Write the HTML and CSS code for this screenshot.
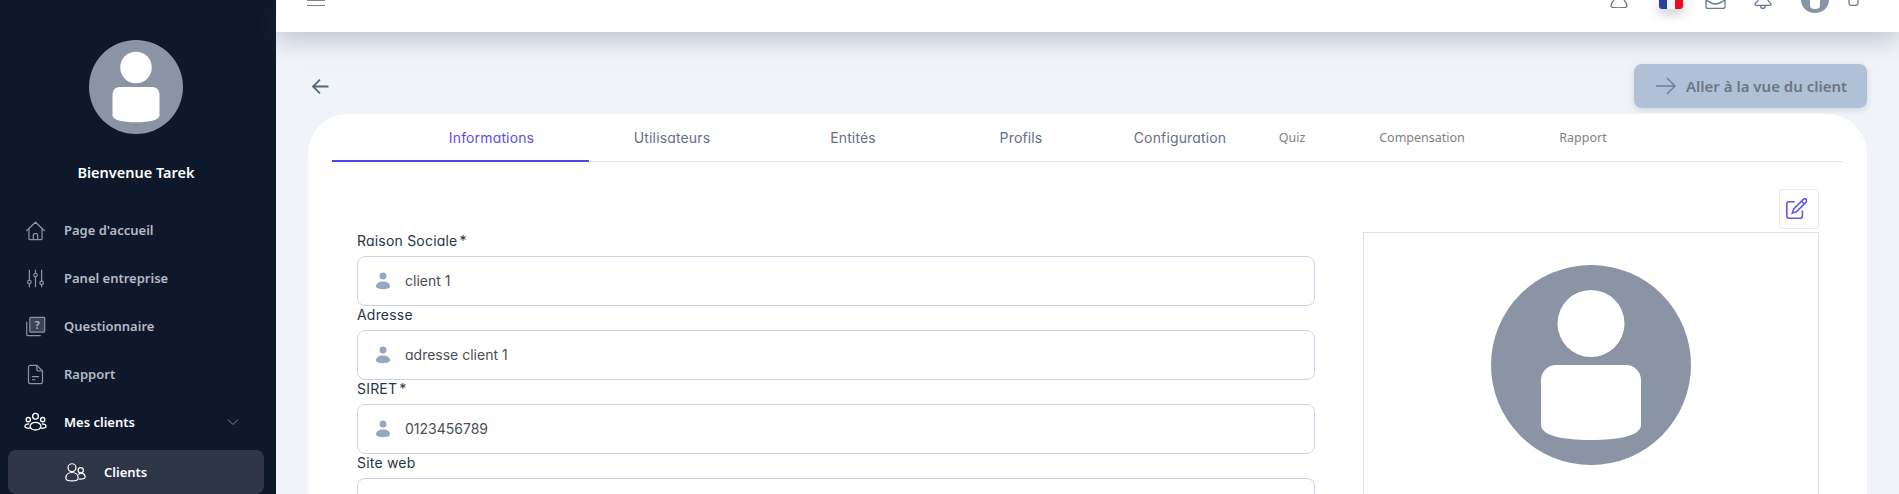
FILE: index.html
```html
<!DOCTYPE html>
<html lang="fr">
<head>
<meta charset="utf-8">
<title>Client</title>
<link rel="stylesheet" href="styles.css">
</head>
<body>
<div class="app">
  <aside class="sidebar">
    <svg class="side-avatar" viewBox="0 0 200 200"><circle cx="100" cy="100" r="100" fill="#8b94a5"/><circle cx="100" cy="58.5" r="33.5" fill="#fff"/><path d="M50 115a15 15 0 0 1 15-15h70a15 15 0 0 1 15 15v45c0 10-20 15-50 15s-50-5-50-15z" fill="#fff"/></svg>
    <div class="welcome">Bienvenue Tarek</div>
    <nav class="menu">
      <a class="item">
        <svg class="ico" viewBox="0 0 24 24"><path d="M1.500 12.500 12 2.500l10.500 10M4.500 10.500V21a1.500 1.500 0 0 0 1.500 1.500h12a1.500 1.500 0 0 0 1.500-1.500V10.500M9.500 22.500V17a1.500 1.500 0 0 1 1.500-1.500h2a1.500 1.500 0 0 1 1.500 1.500v5.500"/></svg>
        <span>Page d'accueil</span>
      </a>
      <a class="item">
        <svg class="ico" viewBox="0 0 24 24"><path d="M5 2v12M5 18v4M12 2v4M12 10v12M19 2v13M19 19v3"/><circle cx="5" cy="16" r="2"/><circle cx="12" cy="8" r="2"/><circle cx="19" cy="17" r="2"/></svg>
        <span>Panel entreprise</span>
      </a>
      <a class="item">
        <svg class="ico" viewBox="0 0 24 24"><path d="M2 6.500V21a1.500 1.500 0 0 0 1.500 1.500H18"/><rect x="5.500" y="1.500" width="17" height="17" rx="1" fill="#3b4453"/><text x="14" y="14.500" class="q">?</text></svg>
        <span>Questionnaire</span>
      </a>
      <a class="item">
        <svg class="ico" viewBox="0 0 24 24"><path d="M13.500 1.500H6A2 2 0 0 0 4 3.500v17a2 2 0 0 0 2 2h12a2 2 0 0 0 2-2V8zM13.500 1.500V6a2 2 0 0 0 2 2H20M8 14.500h8M8 18h4"/></svg>
        <span>Rapport</span>
      </a>
      <a class="item open">
        <svg class="ico wide" viewBox="0 0 24 24"><circle cx="12" cy="5.500" r="3"/><circle cx="4.500" cy="9" r="2.200"/><circle cx="19.500" cy="9" r="2.200"/><path d="M6.500 15c1-2.500 3-3.200 5.500-3.200s4.500.7 5.500 3.200c.5 1.800-.5 3-1.500 3.800-3 1.500-5 1.500-8 0-1-.8-2-2-1.500-3.800zM5.500 13.500c-3 0-4.500 1-4.500 2.500s2 2 5 2M18.500 13.500c3 0 4.500 1 4.500 2.500s-2 2-5 2"/></svg>
        <span>Mes clients</span>
        <svg class="chev" viewBox="0 0 12 8"><path d="M1 1.500 6 6.500l5-5"/></svg>
      </a>
      <a class="sub">
        <svg class="ico bright" viewBox="0 0 24 24"><circle cx="8" cy="6.500" r="4.500"/><circle cx="18" cy="9.500" r="3"/><path d="M1 18.500c0-4 3-6.500 7-6.500s7 2.500 7 6.500-14 4-14 0zM15 14.500c1-1 2-1.500 3.500-1.500 3 0 4.500 2 4.500 4s-3 3-7 2.500"/></svg>
        <span>Clients</span>
      </a>
    </nav>
  </aside>
  <div class="main">
    <header class="topbar">
      <svg class="burger" viewBox="0 0 18 6"><path d="M0 .5h18M0 5.500h18"/></svg>
      <div class="top-icons">
        <svg class="t-user" viewBox="0 0 18 8"><path d="M4 0C2 2 1 4.500 1 6c0 .9.700 1.300 2 1.500 4 .4 8 .4 12 0 1.300-.2 2-.6 2-1.500 0-1.500-1-4-3-6"/></svg>
        <div class="flag"><i class="blue"></i><i class="white"></i><i class="red"></i></div>
        <svg class="t-mail" viewBox="0 0 21 9"><path d="M1 0v6.500A2 2 0 0 0 3 8.500h15a2 2 0 0 0 2-2V0M1 .5c3 0 4 3.500 9.500 3.500S17 .5 20 .5"/></svg>
        <svg class="t-bell" viewBox="0 0 18 9"><path d="M4 0c0 2-3 3-3 4.500 0 .5.500.8 1 .8h14c.5 0 1-.3 1-.8C17 3 14 2 14 0M6.500 5.500c0 4 5 4 5 0"/></svg>
        <svg class="t-avatar" viewBox="0 0 28 13"><path d="M0 0a14 13 0 0 0 28 0z" fill="#8b94a5"/><path d="M9 0h10v6c0 2-2 3-5 3s-5-1-5-3z" fill="#fff"/></svg>
        <svg class="t-small" viewBox="0 0 14 6"><path d="M1 0v3a2.500 2.500 0 0 0 2.500 2.500h4A2.500 2.500 0 0 0 10 3V0"/></svg>
      </div>
    </header>
    <div class="content">
      <div class="toolbar">
        <svg class="back" viewBox="0 0 16 16"><path d="M15.500 8H1M7.500 1.500 1 8l6.500 6.500"/></svg>
        <button class="go" type="button">
          <svg viewBox="0 0 20 18"><path d="M0 9h19M11 1l8 8-8 8"/></svg>
          Aller à la vue du client
        </button>
      </div>
      <section class="card">
        <div class="tabs">
          <a class="tab active t1">Informations</a>
          <a class="tab t2">Utilisateurs</a>
          <a class="tab t3">Entités</a>
          <a class="tab t4">Profils</a>
          <a class="tab t5">Configuration</a>
          <a class="tab minor t6">Quiz</a>
          <a class="tab minor t7">Compensation</a>
          <a class="tab minor t8">Rapport</a>
        </div>
        <div class="body">
          <form class="form">
            <label class="lbl">Raison Sociale<span class="req">*</span></label>
            <div class="field"><svg class="pin" viewBox="0 0 14 18"><circle cx="7" cy="4" r="3.500"/><path d="M0 14.500C0 11 3 9.500 7 9.500s7 1.500 7 5-14 3.500-14 0z"/></svg><input value="client 1" readonly></div>
            <label class="lbl">Adresse</label>
            <div class="field"><svg class="pin" viewBox="0 0 14 18"><circle cx="7" cy="4" r="3.500"/><path d="M0 14.500C0 11 3 9.500 7 9.500s7 1.500 7 5-14 3.500-14 0z"/></svg><input value="adresse client 1" readonly></div>
            <label class="lbl">SIRET<span class="req">*</span></label>
            <div class="field"><svg class="pin" viewBox="0 0 14 18"><circle cx="7" cy="4" r="3.500"/><path d="M0 14.500C0 11 3 9.500 7 9.500s7 1.500 7 5-14 3.500-14 0z"/></svg><input value="0123456789" readonly></div>
            <label class="lbl">Site web</label>
            <div class="field"><svg class="pin" viewBox="0 0 14 18"><circle cx="7" cy="4" r="3.500"/><path d="M0 14.500C0 11 3 9.500 7 9.500s7 1.500 7 5-14 3.500-14 0z"/></svg><input value="" readonly></div>
          </form>
          <div class="side">
            <button class="edit" type="button">
              <svg viewBox="0 0 24 24"><path d="M10.500 4H4a2 2 0 0 0-2 2v14a2 2 0 0 0 2 2h13a2 2 0 0 0 2-2v-6.500"/><path d="M20 1.500a2.100 2.100 0 0 1 3 3L12.500 15 8 16.500l1.500-4.500zM18 3.500l3 3"/></svg>
            </button>
            <div class="logo-box">
              <svg class="logo" viewBox="0 0 200 200"><circle cx="100" cy="100" r="100" fill="#8b94a5"/><circle cx="100" cy="58.500" r="33.500" fill="#fff"/><path d="M50 115a15 15 0 0 1 15-15h70a15 15 0 0 1 15 15v45c0 10-20 15-50 15s-50-5-50-15z" fill="#fff"/></svg>
            </div>
          </div>
        </div>
      </section>
    </div>
  </div>
</div>
</body>
</html>
```
FILE: styles.css
```css
* { box-sizing: border-box; }
html, body { margin: 0; height: 494px; overflow: hidden; }
body { font-family: "Noto Sans", sans-serif; background: #f0f4f9; }

.app { display: flex; height: 494px; overflow: hidden; }

.sidebar {
  width: 276px;
  flex: none;
  background: #0e182b;
  display: flex;
  flex-direction: column;
  align-items: center;
  padding-top: 40px;
}
.side-avatar { width: 96px; height: 96px; display: block; margin-right: 4px; }
.welcome {
  margin-top: 27px;
  margin-right: 4px;
  height: 22px;
  line-height: 22px;
  color: #fff;
  font-size: 14.500px;
  font-weight: 600;
}
.menu { width: 100%; margin-top: 23px; display: flex; flex-direction: column; }
.item {
  height: 48px;
  display: flex;
  align-items: center;
  padding-left: 25px;
  color: #b6bac2;
  font-size: 13px;
  font-weight: 600;
}
.item span { margin-left: 18px; }
.ico {
  width: 21px;
  height: 21px;
  flex: none;
  fill: none;
  stroke: #8e939e;
  stroke-width: 1.400;
}
.ico .q { fill: #aab0bb; stroke: none; font: 700 12px "Noto Sans", sans-serif; text-anchor: middle; }
.open { color: #fff; }
.open .ico, .ico.bright { stroke: #fff; }
.ico.wide { width: 23px; height: 23px; margin-left: -1px; margin-right: -1px; }
.chev { width: 12px; height: 8px; margin-left: auto; margin-right: 37px; fill: none; stroke: #7d8390; stroke-width: 1; }
.sub {
  margin: 4px 12px 0 8px;
  height: 44px;
  border-radius: 8px;
  background: #2d3546;
  display: flex;
  align-items: center;
  padding-left: 57px;
  color: #fff;
  font-size: 13px;
  font-weight: 600;
}
.sub span { margin-left: 18px; }

.main { flex: 1; min-width: 0; display: flex; flex-direction: column; }

.topbar {
  height: 32px;
  flex: none;
  background: #fff;
  box-shadow: 0 8px 24px rgba(60, 70, 90, .28);
  display: flex;
  align-items: flex-start;
  justify-content: space-between;
  padding: 0 37px 0 31px;
  overflow: hidden;
  position: relative;
}
.burger { width: 18px; height: 6px; fill: none; stroke: #7a8296; stroke-width: 1; display: block; }
.top-icons { display: flex; align-items: flex-start; }
.top-icons svg { display: block; fill: none; stroke: #6b7a94; stroke-width: 1.300; }
.t-user { width: 18px; height: 8px; }
.flag {
  margin-left: 31px;
  width: 24px;
  height: 9px;
  display: flex;
  border-radius: 0 0 3px 3px;
  overflow: hidden;
  box-shadow: 0 4px 12px rgba(60, 70, 90, .35);
}
.flag i { flex: 1; display: block; }
.blue { background: #2a3e9e; }
.white { background: #f3f6fc; }
.red { background: #f00a1e; }
.t-mail { width: 21px; height: 9px; margin-left: 22px; }
.t-bell { width: 18px; height: 9px; margin-left: 28px; }
.top-icons .t-avatar { width: 28px; height: 13px; margin-left: 29px; stroke: none; }
.t-small { width: 14px; height: 6px; margin-left: 19px; }

.content { flex: 1; padding: 32px 32px 0; display: flex; flex-direction: column; }
.toolbar { height: 44px; flex: none; display: flex; align-items: center; justify-content: space-between; padding-left: 4px; }
.back { width: 17px; height: 17px; fill: none; stroke: #56667f; stroke-width: 1.700; }
.go {
  width: 233px;
  height: 44px;
  border: 0;
  border-radius: 8px;
  background: #b0c0d6;
  color: #6d7583;
  font: 600 15px "Noto Sans", sans-serif;
  display: flex;
  align-items: center;
  justify-content: flex-start;
  padding: 0 0 0 22px;
  gap: 10px;
  box-shadow: 0 2px 6px rgba(60, 70, 90, .18);
}
.go svg { width: 20px; height: 18px; fill: none; stroke: #6f7c93; stroke-width: 1.400; }

.card {
  margin-top: 6px;
  flex: 1;
  background: #fff;
  border-radius: 40px 40px 0 0;
  font-family: "Inter", sans-serif;
  font-feature-settings: "cv11";
}
.tabs {
  margin: 0 24px;
  height: 48px;
  display: flex;
  border-bottom: 1px solid #e4e6ee;
}
.tab {
  height: 48px;
  line-height: 48px;
  text-align: center;
  color: #667085;
  font-size: 14px;
  font-weight: 400;
  letter-spacing: .15px;
  flex: none;
}
.active { color: #5b4ef0; border-bottom: 2px solid #4f46e5; }
.minor { font: 400 12.500px/47px "Noto Sans", sans-serif; letter-spacing: 0; color: #808080; }
.t1 { width: 257px; padding-left: 62px; }
.t2 { width: 166px; }
.t3 { width: 196px; }
.t4 { width: 140px; }
.t5 { width: 178px; }
.t6 { width: 46px; }
.t7 { width: 214px; }
.t8 { width: 108px; }

.body {
  padding: 27px 48px 0 49px;
  display: grid;
  grid-template-columns: 958px 456px;
  column-gap: 48px;
}
.form { padding-top: 43px; display: flex; flex-direction: column; }
.lbl { height: 24px; line-height: 17px; font-size: 14px; letter-spacing: .2px; font-weight: 400; color: #283548; display: block; }
.req { margin-left: 2px; }
.field {
  height: 50px;
  flex: none;
  border: 1px solid #c9d5e6;
  border-radius: 8px;
  display: flex;
  align-items: center;
  padding-left: 18px;
}
.pin { width: 14px; height: 18px; fill: #98a6bf; flex: none; }
.field input {
  flex: 1;
  border: 0;
  outline: 0;
  background: none;
  margin-left: 15px;
  padding: 0 0 2px;
  font: 400 14px "Inter", sans-serif;
  font-feature-settings: "cv11";
  color: #4a4f57;
}
.side { display: flex; flex-direction: column; align-items: flex-end; }
.edit {
  width: 40px;
  height: 40px;
  padding: 0 0 0 5px;
  background: #fff;
  border: 1px solid #e8eaf1;
  border-radius: 4px;
  display: flex;
  align-items: center;
  justify-content: flex-start;
}
.edit svg { width: 22px; height: 22px; fill: none; stroke: #5f54ee; stroke-width: 1.700; }
.logo-box {
  margin-top: 3px;
  width: 100%;
  height: 300px;
  border: 1px solid #dfe2ec;
  display: flex;
  justify-content: center;
  padding-top: 32px;
}
.logo { width: 200px; height: 200px; display: block; }
```
